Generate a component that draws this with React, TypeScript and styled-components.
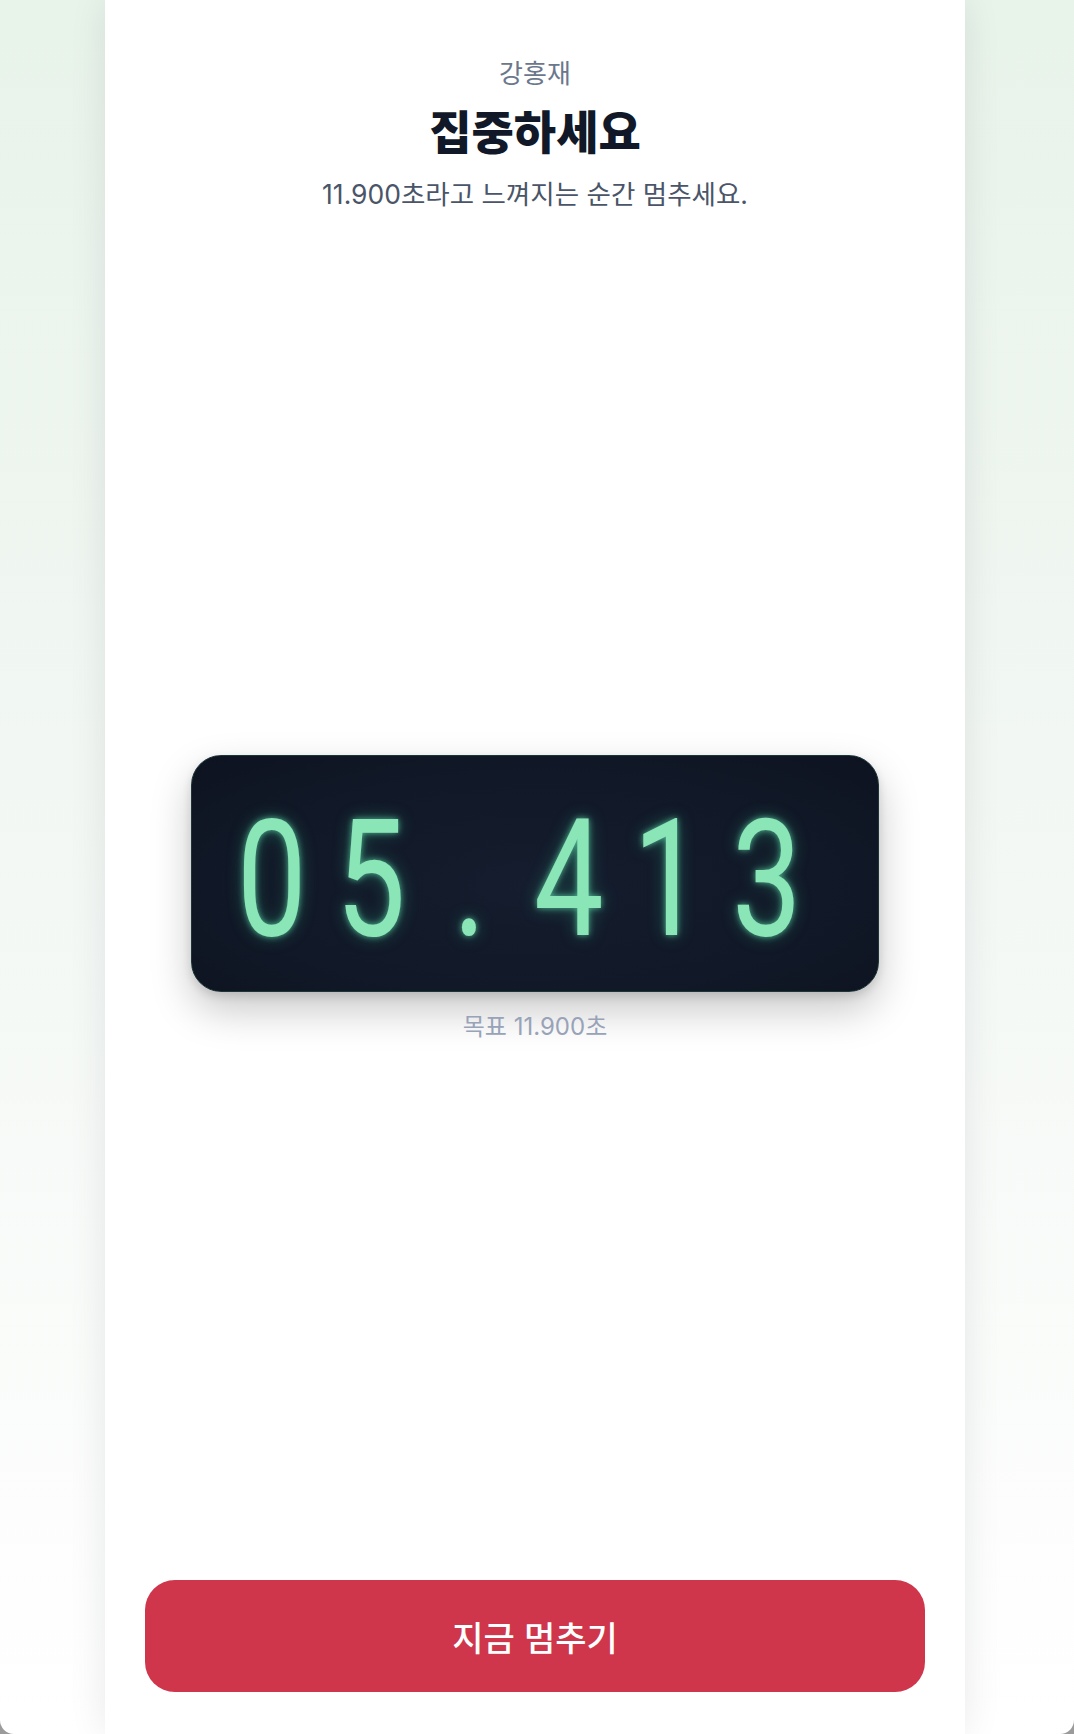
import React from 'react';
import styled, { createGlobalStyle } from 'styled-components';

const GlobalStyle = createGlobalStyle`
  html, body {
    margin: 0;
    padding: 0;
    background: #9b9b9b;
  }
  body {
    font-family: "Inter", "Noto Sans CJK KR", "Noto Sans", sans-serif;
    -webkit-font-smoothing: antialiased;
  }
  * { box-sizing: border-box; }
`;

const Screen = styled.div`
  min-height: 100vh;
  display: flex;
  justify-content: center;
  padding-right: 4px;
  background: linear-gradient(180deg, #e8f3ea 0%, #f2f7f3 45%, #ffffff 100%);
  border-radius: 0 0 14px 14px;
  overflow: hidden;
`;

const Card = styled.main`
  width: 860px;
  min-height: 100vh;
  background: #ffffff;
  box-shadow: 0 0 36px rgba(15, 23, 42, 0.09);
  display: flex;
  flex-direction: column;
  padding: 0 40px 42px;
`;

const Header = styled.header`
  padding-top: 57px;
  text-align: center;
`;

const Player = styled.div`
  font-size: 26px;
  line-height: 34px;
  color: #6b778c;
`;

const Title = styled.h1`
  margin: 13px 0 0;
  font-size: 46px;
  line-height: 56px;
  font-weight: 800;
  color: #111827;
`;

const Hint = styled.p`
  margin: 17px 0 0;
  font-size: 26.5px;
  line-height: 34px;
  color: #4a5568;
`;

const Stage = styled.section`
  flex: 1;
  padding-top: 6px;
  display: flex;
  flex-direction: column;
  align-items: center;
  justify-content: center;
`;

const Display = styled.div`
  width: 688px;
  height: 237px;
  border-radius: 30px;
  border: 1.5px solid #1c3536;
  background: radial-gradient(ellipse at 50% 55%, #151d2e 0%, #111827 60%, #0d1320 100%);
  box-shadow: 0 18px 40px rgba(0, 0, 0, 0.22), 0 4px 10px rgba(0, 0, 0, 0.12);
  display: flex;
  align-items: center;
  justify-content: center;
`;

const Digits = styled.div`
  display: flex;
  padding: 12px 32px 0 0;
`;

const Cell = styled.span`
  width: 99px;
  display: flex;
  justify-content: center;
  font-family: "Roboto", "Inter", sans-serif;
  font-size: 163px;
  line-height: 1;
  font-weight: 400;
  color: #8ae6b7;
  text-shadow: 0 0 7px rgba(110, 231, 183, 0.7), 0 0 20px rgba(52, 211, 153, 0.35);
`;

const Glyph = styled.span`
  display: inline-block;
  transform: scaleX(0.76);
`;

const Target = styled.div`
  margin-top: 20px;
  font-size: 24px;
  line-height: 30px;
  color: #98a3b8;
`;

const StopButton = styled.button`
  height: 112px;
  width: 100%;
  border: none;
  border-radius: 30px;
  background: #cf364b;
  color: #ffffff;
  font-family: inherit;
  font-size: 34px;
  font-weight: 500;
  cursor: pointer;
`;

export default function App() {
  const elapsed = '05.413';
  const target = '11.900';

  return (
    <>
      <GlobalStyle />
      <Screen>
        <Card>
          <Header>
            <Player>강홍재</Player>
            <Title>집중하세요</Title>
            <Hint>{target}초라고 느껴지는 순간 멈추세요.</Hint>
          </Header>
          <Stage>
            <Display>
              <Digits>
                {elapsed.split('').map((ch, i) => (
                  <Cell key={i}>
                    <Glyph>{ch}</Glyph>
                  </Cell>
                ))}
              </Digits>
            </Display>
            <Target>목표 {target}초</Target>
          </Stage>
          <StopButton>지금 멈추기</StopButton>
        </Card>
      </Screen>
    </>
  );
}
